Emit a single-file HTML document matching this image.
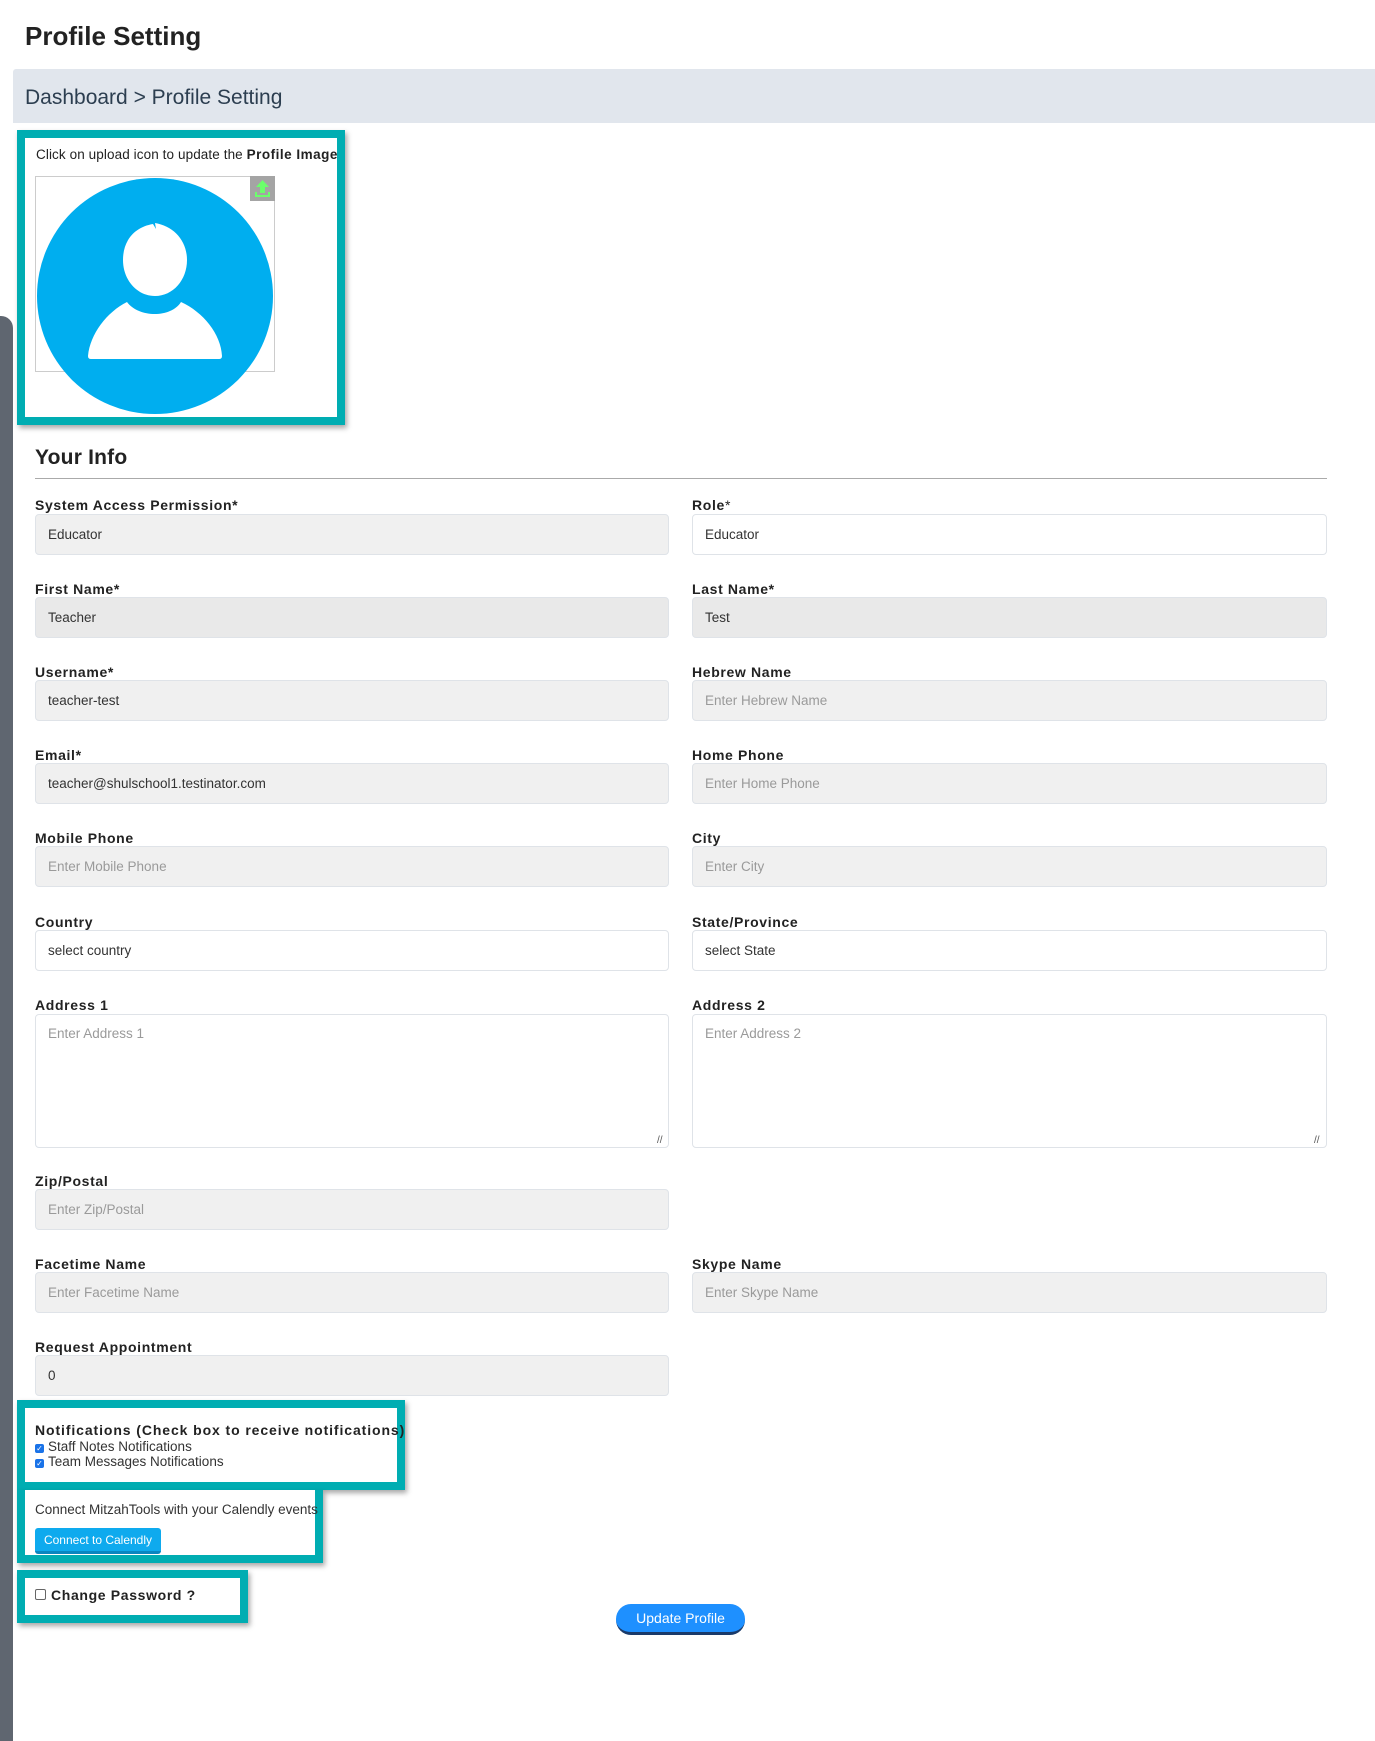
<!DOCTYPE html>
<html><head><meta charset="utf-8"><style>
*{box-sizing:border-box;margin:0;padding:0}
body{width:1375px;height:1741px;position:relative;background:#fff;font-family:"Liberation Sans",Arial,sans-serif;color:#222;overflow:hidden}
.a{position:absolute}
.lbl{position:absolute;font-weight:bold;font-size:14px;color:#222;letter-spacing:.65px}
.inp{position:absolute;height:41px;border:1px solid #dfe3e8;border-radius:4px;background:#f0f0f0;font-size:13.5px;padding:0 12px;line-height:39px;color:#333}
.ph{color:#9a9a9a}
.box{position:absolute;border:8px solid #00adb2;background:#fff;box-shadow:2px 3px 5px rgba(0,0,0,.35)}
</style></head><body>
<div class="a" style="left:25px;top:21px;font-size:26px;font-weight:bold;color:#222">Profile Setting</div>
<div class="a" style="left:13px;top:69px;width:1362px;height:54px;background:#e1e6ed;border-radius:3px 0 0 0"></div>
<div class="a" style="left:25px;top:86px;font-size:21px;color:#2c3e50">Dashboard &gt; Profile Setting</div>
<div class="a" style="left:0;top:316px;width:13px;height:1425px;background:#5f6670;border-radius:0 12px 0 0"></div>

<div class="box" style="left:17px;top:130px;width:328px;height:295px"></div>
<div class="a" style="left:36px;top:147px;font-size:13.5px;color:#222;letter-spacing:.1px">Click on upload icon to update the <b style="letter-spacing:.5px">Profile Image</b></div>
<div class="a" style="left:35px;top:176px;width:240px;height:196px;border:1px solid #ccc"></div>
<svg class="a" style="left:35px;top:176px" width="245" height="240" viewBox="0 0 245 240">
<circle cx="120" cy="120" r="118" fill="#00aeef"/>
<path d="M120 47 C138 50 152 64 152 84 C152 104 138 120 120 120 C102 120 88 104 88 84 C88 64 100 51 118 48 L121 53 Z" fill="#fff"/>
<path d="M92 126 C104 142 136 142 146 126 C168 136 186 158 187 180 Q187 183 184 183 L56 183 Q53 183 53 180 C55 158 72 136 92 126 Z" fill="#fff"/>
<rect x="215" y="0" width="25" height="25" fill="#a4a4a4"/>
<path d="M227.5 4 L234 11 L230 11 L230 17 L225 17 L225 11 L221 11 Z M220 16 L222 16 L222 19 L233 19 L233 16 L235 16 L235 21 L220 21 Z" fill="#6bff6b"/>
</svg>

<div class="a" style="left:35px;top:446px;font-size:21px;font-weight:bold;color:#222;letter-spacing:.2px">Your Info</div>
<div class="a" style="left:35px;top:478px;width:1292px;height:1px;background:#aaa"></div>

<div class="lbl" style="left:35px;top:497px">System Access Permission*</div>
<div class="inp" style="left:35px;top:514px;width:634px">Educator</div>
<div class="lbl" style="left:692px;top:497px">Role<span style="font-weight:normal">*</span></div>
<div class="inp" style="left:692px;top:514px;width:635px;background:#fff">Educator</div>

<div class="lbl" style="left:35px;top:581px">First Name*</div>
<div class="inp" style="left:35px;top:597px;width:634px;background:#e9e9e9">Teacher</div>
<div class="lbl" style="left:692px;top:581px">Last Name*</div>
<div class="inp" style="left:692px;top:597px;width:635px;background:#e9e9e9">Test</div>

<div class="lbl" style="left:35px;top:664px">Username*</div>
<div class="inp" style="left:35px;top:680px;width:634px">teacher-test</div>
<div class="lbl" style="left:692px;top:664px">Hebrew Name</div>
<div class="inp ph" style="left:692px;top:680px;width:635px">Enter Hebrew Name</div>

<div class="lbl" style="left:35px;top:747px">Email*</div>
<div class="inp" style="left:35px;top:763px;width:634px">teacher@shulschool1.testinator.com</div>
<div class="lbl" style="left:692px;top:747px">Home Phone</div>
<div class="inp ph" style="left:692px;top:763px;width:635px">Enter Home Phone</div>

<div class="lbl" style="left:35px;top:830px">Mobile Phone</div>
<div class="inp ph" style="left:35px;top:846px;width:634px">Enter Mobile Phone</div>
<div class="lbl" style="left:692px;top:830px">City</div>
<div class="inp ph" style="left:692px;top:846px;width:635px">Enter City</div>

<div class="lbl" style="left:35px;top:914px">Country</div>
<div class="inp" style="left:35px;top:930px;width:634px;background:#fff">select country</div>
<div class="lbl" style="left:692px;top:914px">State/Province</div>
<div class="inp" style="left:692px;top:930px;width:635px;background:#fff">select State</div>

<div class="lbl" style="left:35px;top:997px">Address 1</div>
<div class="inp ph" style="left:35px;top:1014px;width:634px;height:134px;background:#fff;line-height:18px;padding-top:10px">Enter Address 1</div>
<div class="lbl" style="left:692px;top:997px">Address 2</div>
<div class="inp ph" style="left:692px;top:1014px;width:635px;height:134px;background:#fff;line-height:18px;padding-top:10px">Enter Address 2</div>
<div class="a" style="left:657px;top:1135px;font-size:10px;color:#555">//</div>
<div class="a" style="left:1314px;top:1135px;font-size:10px;color:#555">//</div>

<div class="lbl" style="left:35px;top:1173px">Zip/Postal</div>
<div class="inp ph" style="left:35px;top:1189px;width:634px">Enter Zip/Postal</div>

<div class="lbl" style="left:35px;top:1256px">Facetime Name</div>
<div class="inp ph" style="left:35px;top:1272px;width:634px">Enter Facetime Name</div>
<div class="lbl" style="left:692px;top:1256px">Skype Name</div>
<div class="inp ph" style="left:692px;top:1272px;width:635px">Enter Skype Name</div>

<div class="lbl" style="left:35px;top:1339px">Request Appointment</div>
<div class="inp" style="left:35px;top:1355px;width:634px">0</div>

<div class="box" style="left:17px;top:1400px;width:388px;height:90px"></div>
<div class="lbl" style="left:35px;top:1422px;letter-spacing:.9px">Notifications (Check box to receive notifications)</div>
<div class="a" style="left:35px;top:1439px;font-size:13.5px;line-height:15px;color:#333">
<div><span style="display:inline-block;width:9px;height:9px;background:#1a73e8;border-radius:2px;margin-right:4px;color:#fff;font-size:8px;line-height:9px;text-align:center">✓</span>Staff Notes Notifications</div>
<div><span style="display:inline-block;width:9px;height:9px;background:#1a73e8;border-radius:2px;margin-right:4px;color:#fff;font-size:8px;line-height:9px;text-align:center">✓</span>Team Messages Notifications</div>
</div>

<div class="box" style="left:17px;top:1490px;width:306px;height:73px;border-top:0"></div>
<div class="a" style="left:35px;top:1502px;font-size:13.5px;color:#333">Connect MitzahTools with your Calendly events</div>
<div class="a" style="left:35px;top:1528px;width:126px;height:26px;background:#0eaaee;border-radius:3px;border-bottom:3px solid #0a86c0;color:#fff;font-size:12px;line-height:24px;text-align:center">Connect to Calendly</div>

<div class="box" style="left:17px;top:1570px;width:231px;height:53px"></div>
<div class="a" style="left:35px;top:1589px;width:11px;height:11px;border:1px solid #666;border-radius:2px;background:#fff"></div>
<div class="lbl" style="left:51px;top:1587px">Change Password ?</div>

<div class="a" style="left:616px;top:1604px;width:129px;height:31px;background:#1e90ff;border-radius:15px;border-bottom:3px solid #1a3a6a;color:#fff;font-size:14px;line-height:28px;text-align:center">Update Profile</div>
</body></html>
